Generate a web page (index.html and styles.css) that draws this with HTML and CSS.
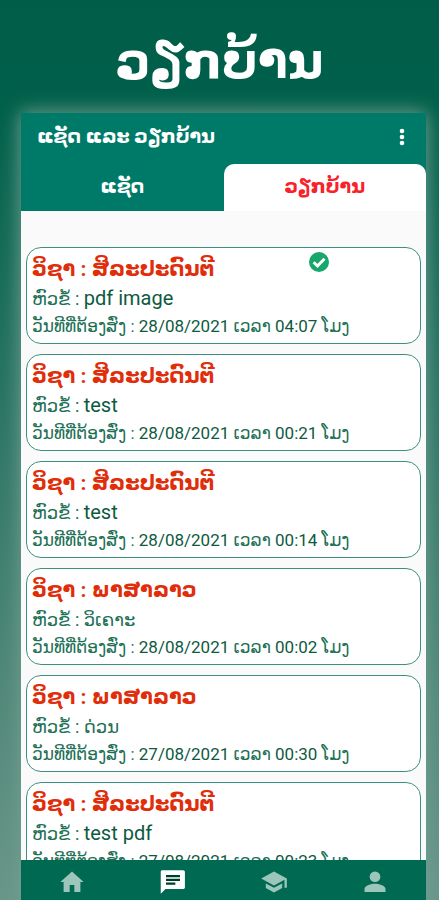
FILE: index.html
```html
<!DOCTYPE html>
<html lang="lo">
<head>
<meta charset="utf-8">
<meta name="viewport" content="width=device-width, initial-scale=1">
<title>ວຽກບ້ານ</title>
<link rel="stylesheet" href="styles.css">
</head>
<body>
<div class="page">
  <h1 class="headline">ວຽກບ້ານ</h1>
  <div class="phone">
    <header class="bar">
      <h2 class="bar-title">ແຊັດ ແລະ ວຽກບ້ານ</h2>
      <button class="more" type="button" aria-label="ເມນູ">
        <svg viewBox="0 0 6 18"><circle cx="3" cy="3" r="2.3"/><circle cx="3" cy="9" r="2.3"/><circle cx="3" cy="15" r="2.3"/></svg>
      </button>
    </header>
    <div class="tabs" role="tablist">
      <button class="tab" type="button" role="tab" aria-selected="false">ແຊັດ</button>
      <button class="tab tab-active" type="button" role="tab" aria-selected="true">ວຽກບ້ານ</button>
    </div>
    <main class="list">
      <article class="card">
        <h3 class="subject">ວິຊາ : ສິລະປະດົນຕີ</h3>
        <p class="topic">ຫົວຂໍ້ : <span class="latin">pdf image</span></p>
        <p class="due">ວັນທີທີ່ຕ້ອງສົ່ງ : <span class="date">28/08/2021</span> ເວລາ <span class="date">04:07</span> ໂມງ</p>
        <svg class="done" viewBox="0 0 20 20"><circle cx="10" cy="10" r="10"/><path d="M4.6 10.2 8.5 14 15.5 6.8"/></svg>
      </article>
      <article class="card">
        <h3 class="subject">ວິຊາ : ສິລະປະດົນຕີ</h3>
        <p class="topic">ຫົວຂໍ້ : <span class="latin">test</span></p>
        <p class="due">ວັນທີທີ່ຕ້ອງສົ່ງ : <span class="date">28/08/2021</span> ເວລາ <span class="date">00:21</span> ໂມງ</p>
      </article>
      <article class="card">
        <h3 class="subject">ວິຊາ : ສິລະປະດົນຕີ</h3>
        <p class="topic">ຫົວຂໍ້ : <span class="latin">test</span></p>
        <p class="due">ວັນທີທີ່ຕ້ອງສົ່ງ : <span class="date">28/08/2021</span> ເວລາ <span class="date">00:14</span> ໂມງ</p>
      </article>
      <article class="card">
        <h3 class="subject">ວິຊາ : ພາສາລາວ</h3>
        <p class="topic">ຫົວຂໍ້ : ວິເຄາະ</p>
        <p class="due">ວັນທີທີ່ຕ້ອງສົ່ງ : <span class="date">28/08/2021</span> ເວລາ <span class="date">00:02</span> ໂມງ</p>
      </article>
      <article class="card">
        <h3 class="subject">ວິຊາ : ພາສາລາວ</h3>
        <p class="topic">ຫົວຂໍ້ : ດ່ວນ</p>
        <p class="due">ວັນທີທີ່ຕ້ອງສົ່ງ : <span class="date">27/08/2021</span> ເວລາ <span class="date">00:30</span> ໂມງ</p>
      </article>
      <article class="card">
        <h3 class="subject">ວິຊາ : ສິລະປະດົນຕີ</h3>
        <p class="topic">ຫົວຂໍ້ : <span class="latin">test pdf</span></p>
        <p class="due">ວັນທີທີ່ຕ້ອງສົ່ງ : <span class="date">27/08/2021</span> ເວລາ <span class="date">00:23</span> ໂມງ</p>
      </article>
    </main>
    <nav class="nav">
      <a class="nav-item" href="#home" aria-label="ໜ້າຫຼັກ"><svg viewBox="0 0 24 24"><path d="M10 20.500v-6h4v6h5.200v-8.500h2.800L12 3 2 12h2.800v8.500z"/></svg></a>
      <a class="nav-item nav-active" href="#chat" aria-label="ແຊັດ"><svg viewBox="0 0 24 24"><path d="M20.600 2H3c-1.100 0-1.500.5-1.500 1.500V22l4-4h15.100c1.100 0 1.600-.6 1.600-1.600V3.600c0-1-.5-1.600-1.600-1.600z"/><path class="lines" d="M6 7h12M6 10.200h12M6 13.400h8"/></svg></a>
      <a class="nav-item" href="#study" aria-label="ຮຽນ"><svg viewBox="0 0 24 24"><path d="M5 13.180v4L12 21l7-3.820v-4L12 17l-7-3.820zM12 3 1 9l11 6 9-4.910V17h2V9L12 3z"/></svg></a>
      <a class="nav-item" href="#profile" aria-label="ໂປຣໄຟລ໌"><svg viewBox="0 0 24 24"><circle cx="12" cy="7.500" r="4.600"/><path d="M12 13.500c-3 0-9 1.500-9 4.500v2.500h18V18c0-3-6-4.500-9-4.500z"/></svg></a>
    </nav>
  </div>
</div>
</body>
</html>
```
FILE: styles.css
```css
* { box-sizing: border-box; }

body {
  margin: 0;
  font-family: Roboto, "DejaVu Sans", sans-serif;
  background: #005e49;
}

h1, h2, h3, p { margin: 0; }

.page {
  display: flex;
  flex-direction: column;
  height: 100vh;
  overflow: hidden;
  background: linear-gradient(#005d48, #00604b 12%, #227060 38%, #4a8474 70%, #6a968a);
}

.headline {
  flex: none;
  height: 113px;
  padding-top: 28px;
  text-align: center;
  font-size: 49px;
  line-height: 68px;
  color: #fff;
}

.phone {
  flex: 1;
  min-height: 0;
  display: flex;
  flex-direction: column;
  margin: 0 13px 0 21px;
  background: #fafafa;
  box-shadow: 0 0 18px 1px #72a091;
}

.bar {
  flex: none;
  display: flex;
  align-items: center;
  justify-content: space-between;
  height: 51px;
  padding: 0 16px 4px;
  background: #007a68;
  color: #fff;
}

.bar-title {
  font-size: 19px;
  line-height: 28px;
}

.more {
  display: flex;
  padding: 0 5px;
  border: 0;
  background: none;
}

.more svg {
  width: 6px;
  height: 18px;
  fill: #fff;
}

.tabs {
  flex: none;
  display: flex;
  height: 47px;
  background: #007a68;
}

.tab {
  flex: 1;
  padding: 0 0 2px;
  border: 0;
  border-radius: 10px 10px 0 0;
  background: none;
  color: #fff;
  font: bold 19px/28px Roboto, "DejaVu Sans", sans-serif;
}

.tab-active {
  background: #fff;
  color: #f8222a;
}

.list {
  flex: 1;
  min-height: 0;
  overflow: hidden;
  display: flex;
  flex-direction: column;
  gap: 10px;
  padding: 36px 5px 0;
}

.card {
  position: relative;
  flex: none;
  padding: 6px 5px 5px;
  border: 1px solid #3d9080;
  border-radius: 15px;
  background: #fff;
  white-space: nowrap;
}

.subject {
  font-size: 21px;
  line-height: 30px;
  color: #e02d0a;
}

.topic {
  font-size: 18px;
  line-height: 30px;
  color: #1c7055;
}

.due {
  font-size: 17px;
  line-height: 24px;
  color: #1c7055;
}

.latin,
.date {
  line-height: 1;
  color: #0e5a41;
}

.latin { font-size: 20px; }

.done {
  position: absolute;
  top: 4px;
  right: 91px;
  width: 20px;
  height: 20px;
  fill: #17a66b;
}

.done path {
  fill: none;
  stroke: #fff;
  stroke-width: 3;
}

.nav {
  flex: none;
  display: flex;
  height: 40px;
  background: #006951;
}

.nav-item {
  flex: 1;
  display: flex;
  align-items: center;
  justify-content: center;
  padding-top: 4px;
}

.nav-item svg {
  width: 28px;
  height: 28px;
  fill: #9cc6bb;
}

.nav-active svg { fill: #fff; }

.nav-active .lines {
  fill: none;
  stroke: #003d28;
  stroke-width: 2;
}
```
